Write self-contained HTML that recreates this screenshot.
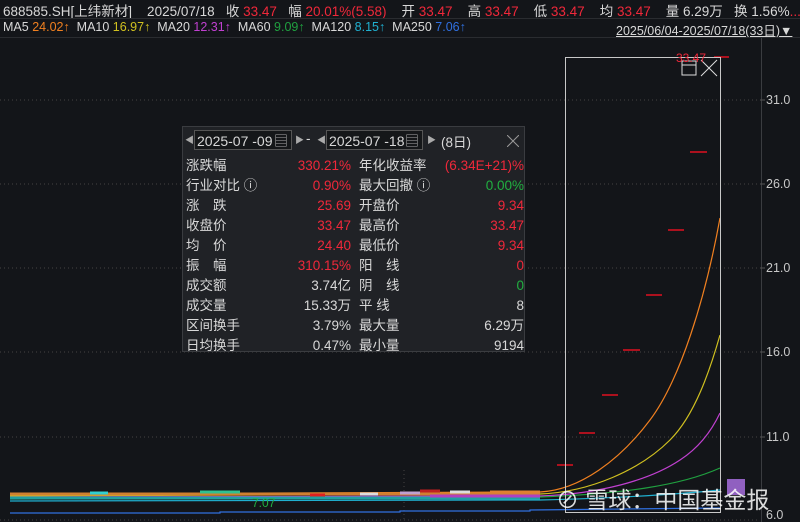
<!DOCTYPE html>
<html><head><meta charset="utf-8"><style>
body{margin:0;width:800px;height:522px;background:#131519;overflow:hidden;font-family:"Liberation Sans","Noto Sans CJK SC",sans-serif;position:relative;color:#d8d8d8}
.t{position:absolute;white-space:nowrap;font-size:13px}
.r{color:#f0283a}.g{color:#20b040}
#p{position:absolute;left:182px;top:126px;width:343px;height:226px;background:#202226;border:1px solid #3a3c40;box-sizing:border-box;font-size:13.5px}
.row{position:absolute;left:3px;height:20px;line-height:20px;width:338px}
.row span{position:absolute}
.l1{left:0}.v1{right:173px;text-align:right}.l2{left:173px}.v2{right:0;text-align:right}
.db{position:absolute;top:3px;height:20px;border:1px solid #555;background:#151719;line-height:20px;font-size:14px;padding-left:2px;box-sizing:border-box}
.ax{position:absolute;left:766px;font-size:12.5px;color:#c8c8c8}
</style></head><body>
<div class="t" style="left:3px;top:0;font-size:13.5px">688585.SH[上纬新材]&nbsp;&nbsp;&nbsp;&nbsp;2025/07/18&nbsp;&nbsp;&nbsp;收 <span class="r">33.47</span>&nbsp;&nbsp;&nbsp;幅 <span class="r">20.01%(5.58)</span>&nbsp;&nbsp;&nbsp;&nbsp;开 <span class="r">33.47</span>&nbsp;&nbsp;&nbsp;&nbsp;高 <span class="r">33.47</span>&nbsp;&nbsp;&nbsp;&nbsp;低 <span class="r">33.47</span>&nbsp;&nbsp;&nbsp;&nbsp;均 <span class="r">33.47</span>&nbsp;&nbsp;&nbsp;&nbsp;量 6.29万&nbsp;&nbsp;&nbsp;换 1.56%<span class="r">...</span></div>
<div style="position:absolute;left:0;top:18px;width:800px;height:1px;background:#2a2c30"></div>
<div class="t" style="left:3px;top:20px;font-size:12.5px">MA5 <span style="color:#f08020">24.02↑</span>&nbsp; MA10 <span style="color:#d0c020">16.97↑</span>&nbsp; MA20 <span style="color:#c040d0">12.31↑</span>&nbsp; MA60 <span style="color:#20a040">9.09↑</span>&nbsp; MA120 <span style="color:#20b0d0">8.15↑</span>&nbsp; MA250 <span style="color:#3070e0">7.06↑</span></div>
<div class="t" style="left:616px;top:20px;font-size:12.5px;text-decoration:underline">2025/06/04-2025/07/18(33日)▼</div>
<div style="position:absolute;left:0;top:37px;width:800px;height:1px;background:#2a2c30"></div>
<div style="position:absolute;left:761px;top:38px;width:1px;height:484px;background:#3a3c40"></div>
<svg style="position:absolute;left:0;top:0" width="800" height="522">
<g stroke="#444" stroke-dasharray="1,3"><line x1="0" y1="100" x2="760" y2="100"/><line x1="0" y1="184" x2="760" y2="184"/><line x1="0" y1="268" x2="760" y2="268"/><line x1="0" y1="352" x2="760" y2="352"/><line x1="0" y1="437" x2="760" y2="437"/><line x1="0" y1="520" x2="760" y2="520"/><line x1="404" y1="470" x2="404" y2="520"/></g>
<g stroke="#555"><line x1="760" y1="100" x2="765" y2="100"/><line x1="760" y1="184" x2="765" y2="184"/><line x1="760" y1="268" x2="765" y2="268"/><line x1="760" y1="352" x2="765" y2="352"/><line x1="760" y1="437" x2="765" y2="437"/></g>
<g stroke="#e01020" stroke-width="1.5"><line x1="557" y1="465" x2="573" y2="465"/><line x1="579" y1="433" x2="595" y2="433"/><line x1="602" y1="395" x2="618" y2="395"/><line x1="623" y1="350" x2="640" y2="350"/><line x1="646" y1="295" x2="662" y2="295"/><line x1="668" y1="230" x2="684" y2="230"/><line x1="690" y1="152" x2="707" y2="152"/><line x1="714" y1="57" x2="729" y2="57"/></g>
<g fill="none" stroke-width="1.2">
<path d="M10 494 L540 492 C580 490 620 460 650 420 C680 380 705 300 720 218" stroke="#f08020"/>
<path d="M10 496 L540 494 C590 492 640 470 670 440 C695 415 710 370 720 335" stroke="#d0c020"/>
<path d="M10 497 L540 496 C600 494 650 480 680 460 C700 447 712 430 720 413" stroke="#c040d0"/>
<path d="M10 499 L540 497 C620 494 680 486 720 468" stroke="#20a040"/>
<path d="M10 501 L540 500 C620 498 680 494 720 490" stroke="#20b0d0"/>
<path d="M10 513 L220 513 L220 512 L400 512 L400 511 L530 511 L530 510 L720 508" stroke="#3070e0"/>
</g>
<g stroke-width="3">
<line x1="10" y1="494" x2="540" y2="494" stroke="#d08030"/>
<line x1="10" y1="498" x2="540" y2="498" stroke="#20a0a0"/>
<line x1="90" y1="493" x2="108" y2="493" stroke="#30d0d0"/><line x1="200" y1="492" x2="240" y2="492" stroke="#30c090"/>
<line x1="310" y1="495" x2="325" y2="495" stroke="#e02020"/><line x1="360" y1="494" x2="378" y2="494" stroke="#ddd"/>
<line x1="400" y1="493" x2="420" y2="493" stroke="#c0a0d0"/><line x1="420" y1="491" x2="440" y2="491" stroke="#c02020"/>
<line x1="450" y1="492" x2="470" y2="492" stroke="#ddd"/><line x1="490" y1="492" x2="540" y2="492" stroke="#e08030"/>
<line x1="430" y1="496" x2="540" y2="496" stroke="#b040c0"/>
</g>
<rect x="565.5" y="57.5" width="155" height="455" fill="none" stroke="#c8c8c8"/>
<rect x="682" y="61" width="14" height="14" fill="none" stroke="#ddd"/><line x1="682" y1="65" x2="696" y2="65" stroke="#ddd"/>
<path d="M701 60 L717 76 M717 60 L701 76" stroke="#ddd"/>
<rect x="727" y="479" width="18" height="16" fill="#9060c0"/>
</svg>
<div class="t r" style="left:676px;top:51px;font-size:12px">33.47</div>
<div class="t g" style="left:252px;top:496px;font-size:12px">7.07</div>
<div class="ax" style="top:93px">31.0</div><div class="ax" style="top:177px">26.0</div><div class="ax" style="top:261px">21.0</div><div class="ax" style="top:345px">16.0</div><div class="ax" style="top:430px">11.0</div><div class="ax" style="top:508px">6.0</div>
<div class="t" style="left:556px;top:481px;font-size:23px;color:rgba(255,255,255,.85)">⊘ 雪球：中国基金报</div>
<div id="p">
<span style="position:absolute;left:2px;top:6px;font-size:9px;color:#aaa">◀</span>
<div class="db" style="left:11px;width:98px">2025-07 -09<span style="position:absolute;right:3px;top:0;color:#aaa">▤</span></div>
<span style="position:absolute;left:112px;top:6px;font-size:9px;color:#aaa">▶</span>
<span style="position:absolute;left:123px;top:4px">-</span>
<span style="position:absolute;left:134px;top:6px;font-size:9px;color:#aaa">◀</span>
<div class="db" style="left:143px;width:97px">2025-07 -18<span style="position:absolute;right:3px;top:0;color:#aaa">▤</span></div>
<span style="position:absolute;left:244px;top:6px;font-size:9px;color:#aaa">▶</span>
<span style="position:absolute;left:258px;top:4px">(8日)</span>
<svg style="position:absolute;left:324px;top:8px" width="12" height="12"><path d="M0 0L12 12M12 0L0 12" stroke="#999"/></svg>
<div class="row" style="top:29px"><span class="l1">涨跌幅</span><span class="v1 r">330.21%</span><span class="l2">年化收益率</span><span class="v2 r">(6.34E+21)%</span></div>
<div class="row" style="top:49px"><span class="l1">行业对比 ⓘ</span><span class="v1 r">0.90%</span><span class="l2">最大回撤 ⓘ</span><span class="v2 g">0.00%</span></div>
<div class="row" style="top:69px"><span class="l1">涨　跌</span><span class="v1 r">25.69</span><span class="l2">开盘价</span><span class="v2 r">9.34</span></div>
<div class="row" style="top:89px"><span class="l1">收盘价</span><span class="v1 r">33.47</span><span class="l2">最高价</span><span class="v2 r">33.47</span></div>
<div class="row" style="top:109px"><span class="l1">均　价</span><span class="v1 r">24.40</span><span class="l2">最低价</span><span class="v2 r">9.34</span></div>
<div class="row" style="top:129px"><span class="l1">振　幅</span><span class="v1 r">310.15%</span><span class="l2">阳　线</span><span class="v2 r">0</span></div>
<div class="row" style="top:149px"><span class="l1">成交额</span><span class="v1">3.74亿</span><span class="l2">阴　线</span><span class="v2 g">0</span></div>
<div class="row" style="top:169px"><span class="l1">成交量</span><span class="v1">15.33万</span><span class="l2">平 线</span><span class="v2">8</span></div>
<div class="row" style="top:189px"><span class="l1">区间换手</span><span class="v1">3.79%</span><span class="l2">最大量</span><span class="v2">6.29万</span></div>
<div class="row" style="top:209px"><span class="l1">日均换手</span><span class="v1">0.47%</span><span class="l2">最小量</span><span class="v2">9194</span></div>
</div>
</body></html>
